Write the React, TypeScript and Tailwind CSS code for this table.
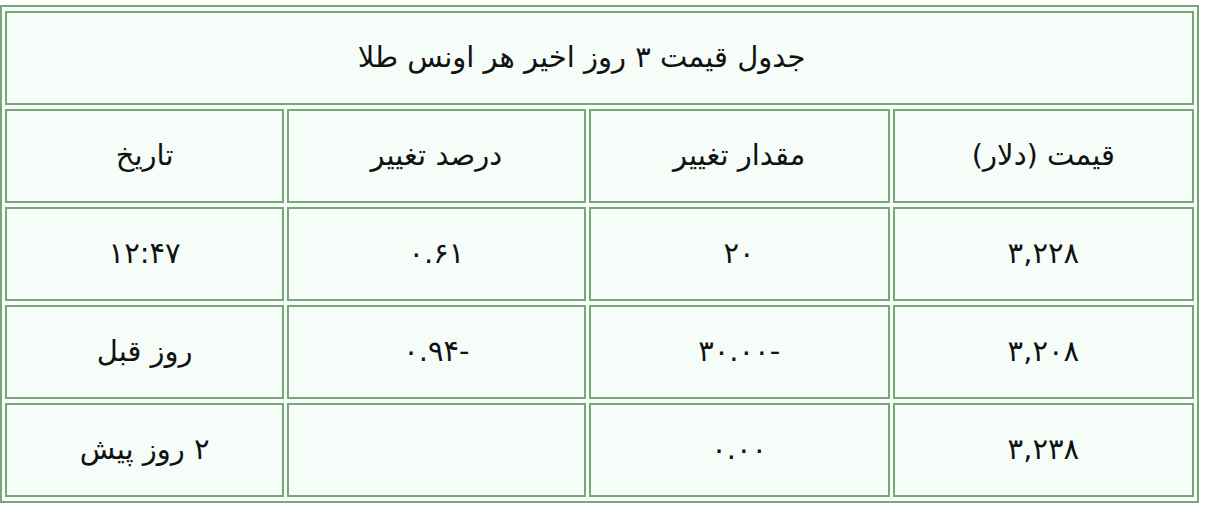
const rows = [
  { price: '۳,۲۲۸', change: '۲۰', percent: '۰.۶۱', date: '۱۲:۴۷' },
  { price: '۳,۲۰۸', change: '-۳۰.۰۰', percent: '-۰.۹۴', date: 'روز قبل' },
  { price: '۳,۲۳۸', change: '۰.۰۰', percent: '', date: '۲ روز پیش' },
];

const headers = ['قیمت (دلار)', 'مقدار تغییر', 'درصد تغییر', 'تاریخ'];

const cell = 'h-[94px] border-2 border-[#78a678] text-center align-middle';

export default function App() {
  return (
    <div className="bg-white pt-[5px]" style={{ fontFamily: '"DejaVu Sans", sans-serif' }}>
      <table
        dir="rtl"
        className="w-[1199px] border-separate border-spacing-x-[3px] border-spacing-y-[4px] border-2 border-[#78a678] bg-[#f6fcf8] text-[29px] text-[#111]"
      >
        <colgroup>
          <col className="w-[301px]" />
          <col className="w-[301px]" />
          <col className="w-[298px]" />
          <col className="w-[279px]" />
        </colgroup>
        <tbody>
          <tr>
            <td colSpan={4} className={`${cell} pr-[36px]`}>
              جدول قیمت ۳ روز اخیر هر اونس طلا
            </td>
          </tr>
          <tr>
            {headers.map((h) => (
              <td key={h} className={cell}>
                {h}
              </td>
            ))}
          </tr>
          {rows.map((r) => (
            <tr key={r.price}>
              <td className={cell}>{r.price}</td>
              <td className={cell}>{r.change}</td>
              <td className={cell}>{r.percent}</td>
              <td className={cell}>{r.date}</td>
            </tr>
          ))}
        </tbody>
      </table>
    </div>
  );
}
